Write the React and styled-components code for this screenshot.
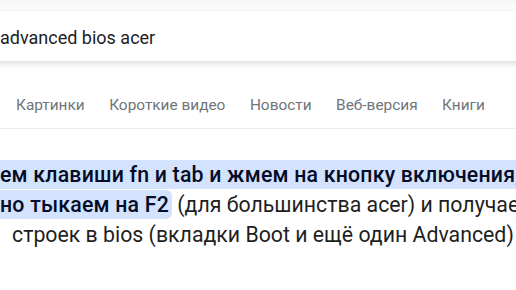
import React from "react";
import styled, { createGlobalStyle } from "styled-components";

const Global = createGlobalStyle`
  html, body { margin: 0; padding: 0; background: #fff; }
  body { width: 516px; height: 290px; overflow: hidden; font-family: Roboto, "Noto Sans", Arial, sans-serif; }
`;

const Page = styled.div`
  width: 516px;
  height: 290px;
  overflow: hidden;
  display: flex;
  flex-direction: column;
`;

const Header = styled.header`
  padding-top: 11px;
  background: linear-gradient(#f6f6f6, #fff 11px);
`;

const SearchBox = styled.div`
  height: 50px;
  margin: 0 -40px 0 -40px;
  padding-left: 40px;
  display: flex;
  align-items: center;
  background: #fff;
  border-radius: 25px;
  box-shadow: 0 2px 5px 1px rgba(64, 60, 67, 0.16);
`;

const Query = styled.span`
  font-size: 18px;
  color: #202124;
  white-space: nowrap;
  padding-top: 2px;
`;

const Tabs = styled.nav`
  display: flex;
  gap: 24.5px;
  padding: 0 16px;
  height: 68px;
  align-items: flex-end;
  box-sizing: border-box;
  padding-bottom: 14px;
  border-bottom: 1px solid #ebebeb;
`;

const Tab = styled.a`
  font-size: 15.4px;
  color: #70757a;
  white-space: nowrap;
  text-decoration: none;
`;

const Snippet = styled.div`
  padding-top: 31px;
  font-size: 21.3px;
  line-height: 30px;
  color: #1f1f1f;
  white-space: nowrap;
`;

const Line = styled.div`
  padding-left: ${(p) => p.$indent || 0}px;
`;

const Mark = styled.span`
  background: #d3e3fd;
  color: #040c28;
  font-weight: 500;
  letter-spacing: 0.2px;
  padding: 2px 0;
  border-radius: ${(p) => (p.$end ? "0 6px 6px 0" : "0")};
  padding-right: ${(p) => (p.$end ? "3px" : "0")};
`;

export default function App() {
  return (
    <Page>
      <Global />
      <Header>
        <SearchBox>
          <Query>advanced bios acer</Query>
        </SearchBox>
      </Header>
      <Tabs>
        <Tab>Картинки</Tab>
        <Tab>Короткие видео</Tab>
        <Tab>Новости</Tab>
        <Tab>Веб-версия</Tab>
        <Tab>Книги</Tab>
      </Tabs>
      <Snippet>
        <Line>
          <Mark>ем клавиши fn и tab и жмем на кнопку включения,&nbsp;&nbsp;&nbsp;</Mark>
        </Line>
        <Line>
          <Mark $end>но тыкаем на F2</Mark> (для большинства acer) и получаем
        </Line>
        <Line $indent={12}>строек в bios (вкладки Boot и ещё один Advanced)</Line>
      </Snippet>
    </Page>
  );
}
